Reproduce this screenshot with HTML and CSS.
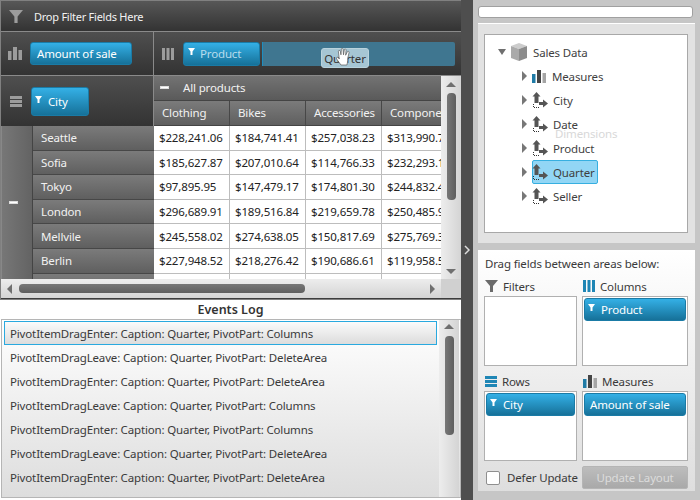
FILE: index.html
```html
<!DOCTYPE html>
<html lang="en">
<head>
  <meta charset="UTF-8">
  <title>Pivot Grid Events</title>
  <link rel="stylesheet" href="styles.css">
</head>
<body>
  <svg class="defs" width="0" height="0">
    <symbol id="i-funnel" viewBox="0 0 13 12"><path d="M0 0h13L8 6v6H5V6z"/></symbol>
    <symbol id="i-mini" viewBox="0 0 7 7"><path d="M0 0h7L4.500 3.500V7h-2V3.500z"/></symbol>
    <symbol id="i-bars" viewBox="0 0 14 13"><path d="M0 4h3.500v9H0zM5 0h4v13H5zM10.500 3H14v10h-3.500z"/></symbol>
    <symbol id="i-cols" viewBox="0 0 12 12"><path d="M0 0h3v12H0zM4.500 0h3v12h-3zM9 0h3v12H9z"/></symbol>
    <symbol id="i-rows" viewBox="0 0 12 11"><path d="M0 0h12v3H0zM0 4h12v3H0zM0 8h12v3H0z"/></symbol>
    <symbol id="i-dim" viewBox="0 0 16 16"><path d="M4.500 0L8.500 4.500H6.500V11h-4V4.500H.5zM7 10h4V7.500l5 4-5 4V13H7z" fill="#555"/><path d="M1.500 12v3.500H7" fill="none" stroke="#333" stroke-dasharray="1 1"/></symbol>
  </svg>

  <div class="app">
    <main class="left">
      <div class="pivot">
        <div class="filter-bar">
          <svg class="zone-icon"><use href="#i-funnel"/></svg>
          <span>Drop Filter Fields Here</span>
        </div>
        <div class="pivot-top">
          <div class="measures-zone">
            <svg class="zone-icon"><use href="#i-bars"/></svg>
            <div class="chip chip-amount">Amount of sale</div>
          </div>
          <div class="columns-zone">
            <svg class="zone-icon icon-cols"><use href="#i-cols"/></svg>
            <div class="chip chip-product"><svg class="mini"><use href="#i-mini"/></svg><span>Product</span></div>
            <div class="drop-slot"></div>
          </div>
        </div>
        <div class="pivot-body">
          <div class="pivot-view">
            <div class="row-side">
              <div class="rows-zone">
                <svg class="zone-icon icon-rows"><use href="#i-rows"/></svg>
                <div class="chip chip-city"><svg class="mini"><use href="#i-mini"/></svg><span>City</span></div>
              </div>
              <div class="row-heads">
                <div class="row-group"><span class="minus"></span></div>
                <div class="row-names">
                  <div class="row-name">Seattle</div>
                  <div class="row-name">Sofia</div>
                  <div class="row-name">Tokyo</div>
                  <div class="row-name">London</div>
                  <div class="row-name">Mellvile</div>
                  <div class="row-name">Berlin</div>
                  <div class="row-name"></div>
                </div>
              </div>
            </div>
            <div class="data-side">
              <div class="all-head"><span class="minus"></span><span>All products</span></div>
              <div class="col-heads">
                <div class="col-head">Clothing</div>
                <div class="col-head">Bikes</div>
                <div class="col-head">Accessories</div>
                <div class="col-head">Components</div>
              </div>
              <div class="data-row"><div>$228,241.06</div><div>$184,741.41</div><div>$257,038.23</div><div>$313,990.75</div></div>
              <div class="data-row"><div>$185,627.87</div><div>$207,010.64</div><div>$114,766.33</div><div>$232,293.14</div></div>
              <div class="data-row"><div>$97,895.95</div><div>$147,479.17</div><div>$174,801.30</div><div>$244,832.48</div></div>
              <div class="data-row"><div>$296,689.91</div><div>$189,516.84</div><div>$219,659.78</div><div>$250,485.92</div></div>
              <div class="data-row"><div>$245,558.02</div><div>$274,638.05</div><div>$150,817.69</div><div>$275,769.36</div></div>
              <div class="data-row"><div>$227,948.52</div><div>$218,276.42</div><div>$190,686.61</div><div>$119,958.54</div></div>
              <div class="data-row"><div></div><div></div><div></div><div></div></div>
            </div>
          </div>
          <div class="vscroll">
            <span class="arrow-up"></span>
            <span class="vthumb"></span>
            <span class="arrow-down"></span>
          </div>
        </div>
        <div class="hscroll-row">
          <div class="hscroll">
            <span class="arrow-left"></span>
            <span class="hthumb"></span>
            <span class="arrow-right"></span>
          </div>
          <div class="corner"></div>
        </div>
      </div>

      <h2 class="log-title">Events Log</h2>
      <div class="log">
        <div class="log-list">
          <div class="log-item selected">PivotItemDragEnter: Caption: Quarter, PivotPart: Columns</div>
          <div class="log-item">PivotItemDragLeave: Caption: Quarter, PivotPart: DeleteArea</div>
          <div class="log-item">PivotItemDragEnter: Caption: Quarter, PivotPart: DeleteArea</div>
          <div class="log-item">PivotItemDragLeave: Caption: Quarter, PivotPart: Columns</div>
          <div class="log-item">PivotItemDragEnter: Caption: Quarter, PivotPart: Columns</div>
          <div class="log-item">PivotItemDragLeave: Caption: Quarter, PivotPart: DeleteArea</div>
          <div class="log-item">PivotItemDragEnter: Caption: Quarter, PivotPart: DeleteArea</div>
        </div>
        <div class="log-scroll">
          <span class="arrow-up"></span>
          <span class="log-thumb"></span>
        </div>
      </div>
    </main>

    <div class="splitter"><svg width="6" height="10" viewBox="0 0 6 10"><path d="M1 1l4 4-4 4" fill="none" stroke="#ddd" stroke-width="1.500"/></svg></div>

    <aside class="right">
      <div class="search"></div>
      <div class="tree-panel">
        <div class="tree">
          <div class="tree-row root">
            <span class="arrow-open"></span>
            <svg class="cube" width="16" height="18" viewBox="0 0 16 18"><path d="M8 0l8 3-8 3-8-3z" fill="#ccc"/><path d="M0 3l8 3v12l-8-3z" fill="#aaa"/><path d="M16 3L8 6v12l8-3z" fill="#8c8c8c"/></svg>
            <span>Sales Data</span>
          </div>
          <div class="tree-row">
            <span class="arrow-closed"></span>
            <svg class="tree-icon icon-measures" width="14" height="13" viewBox="0 0 14 13"><path d="M0 4h3.500v9H0z" fill="#1f7ba6"/><path d="M5 0h4v13H5z" fill="#444"/><path d="M10.500 3H14v10h-3.500z" fill="#a5a5a5"/></svg>
            <span>Measures</span>
          </div>
          <div class="tree-row"><span class="arrow-closed"></span><svg class="tree-icon" width="16" height="16"><use href="#i-dim"/></svg><span>City</span></div>
          <div class="tree-row"><span class="arrow-closed"></span><svg class="tree-icon" width="16" height="16"><use href="#i-dim"/></svg><span>Date</span></div>
          <div class="tree-row"><span class="arrow-closed"></span><svg class="tree-icon" width="16" height="16"><use href="#i-dim"/></svg><span>Product</span></div>
          <div class="tree-row"><span class="arrow-closed"></span><div class="tree-hl"><svg class="tree-icon" width="16" height="16"><use href="#i-dim"/></svg><span>Quarter</span></div></div>
          <div class="tree-row"><span class="arrow-closed"></span><svg class="tree-icon" width="16" height="16"><use href="#i-dim"/></svg><span>Seller</span></div>
        </div>
      </div>
      <div class="fields-panel">
        <p class="fields-hint">Drag fields between areas below:</p>
        <div class="areas">
          <div class="area">
            <div class="area-label"><svg class="area-icon grey" width="13" height="12"><use href="#i-funnel"/></svg>Filters</div>
            <div class="area-box"></div>
          </div>
          <div class="area">
            <div class="area-label"><svg class="area-icon blue" width="12" height="12"><use href="#i-cols"/></svg>Columns</div>
            <div class="area-box"><div class="chip chip-list"><svg class="mini"><use href="#i-mini"/></svg><span>Product</span></div></div>
          </div>
          <div class="area">
            <div class="area-label"><svg class="area-icon blue" width="12" height="11"><use href="#i-rows"/></svg>Rows</div>
            <div class="area-box"><div class="chip chip-list"><svg class="mini"><use href="#i-mini"/></svg><span>City</span></div></div>
          </div>
          <div class="area">
            <div class="area-label"><svg class="area-icon" width="14" height="13" viewBox="0 0 14 13"><path d="M0 4h3.500v9H0z" fill="#1f7ba6"/><path d="M5 0h4v13H5z" fill="#444"/><path d="M10.500 3H14v10h-3.500z" fill="#a5a5a5"/></svg>Measures</div>
            <div class="area-box"><div class="chip chip-list chip-plain">Amount of sale</div></div>
          </div>
        </div>
        <div class="fields-foot">
          <label class="defer"><span class="checkbox"></span>Defer Update</label>
          <button class="update" disabled>Update Layout</button>
        </div>
      </div>
    </aside>
  </div>

  <!-- drag cue over the pivot and the ghost text over the tree -->
  <div class="drag-cue">Quarter</div>
  <svg class="hand" width="17" height="19" viewBox="0 0 20 22"><path d="M7 21L2 14C1 12 3 11 4.500 13L5 14 4 5C4 3.500 6 3.500 6.300 5L7 9 7.500 2.500C7.500 1 9.500 1 9.500 2.500L10 9 11 3C11.200 1.500 13 2 13 3.500L12.500 9.500 14.500 5.500C15 4.200 17 5 16.500 6.500L15 13C15 17 14.500 19 14 21z" fill="#fff" stroke="#555" stroke-width=".8"/></svg>
  <div class="ghost-text">Dimensions</div>
</body>
</html>
```

FILE: styles.css
```css
* {
  box-sizing: border-box;
}
html, body {
  height: 100%;
}
body {
  margin: 0;
  overflow: hidden;
  position: relative;
  font-family: "Noto Sans", "Liberation Sans", sans-serif;
  font-size: 11.5px;
  letter-spacing: -0.15px;
  color: #3a3a3a;
  background-color: #fff;
}
.defs {
  position: absolute;
}
.app {
  display: flex;
  height: 500px;
}

/* left side */
.left {
  width: 461px;
  display: flex;
  flex-direction: column;
}
.pivot {
  height: 300px;
  display: flex;
  flex-direction: column;
  border-top: 1px solid #808080;
  border-left: 1px solid #808080;
  border-bottom: 1px solid #808080;
  color: #f2f2f2;
  background-color: #3c3c3c;
}
.zone-icon {
  width: 14px;
  height: 13px;
  fill: #9c9c9c;
  flex: none;
}
.filter-bar {
  height: 31px;
  display: flex;
  align-items: center;
  gap: 11px;
  padding-left: 8px;
  font-size: 11px;
  letter-spacing: -0.25px;
  background: linear-gradient(#575757, #333);
  border-bottom: 1px solid #8a8a8a;
}
.pivot-top {
  height: 44px;
  display: flex;
  background: linear-gradient(#4f4f4f, #333);
  border-bottom: 1px solid #8a8a8a;
}
.measures-zone {
  width: 153px;
  display: flex;
  align-items: center;
  gap: 8px;
  padding-left: 7px;
  border-right: 1px solid #8a8a8a;
}
.columns-zone {
  flex: 1;
  display: flex;
  align-items: center;
  padding-left: 8px;
  padding-right: 6px;
}
.icon-cols {
  width: 12px;
  height: 12px;
  margin-right: 9px;
}
.chip {
  height: 23px;
  display: flex;
  align-items: center;
  padding-left: 6px;
  color: #fff;
  background: linear-gradient(#34b0e6, #167199);
  border: 1px solid #1a7ba6;
  border-radius: 3px;
}
.mini {
  width: 7px;
  height: 7px;
  fill: #fff;
  margin-right: 6px;
  margin-bottom: 4px;
  flex: none;
}
.chip-amount {
  width: 102px;
}
.chip-product {
  width: 77px;
  height: 24px;
  flex: none;
  padding-left: 4px;
  color: #b8dcec;
}
.chip-product .mini {
  margin-right: 5px;
}
.drop-slot {
  flex: 1;
  height: 24px;
  margin-left: 2px;
  background-color: #3f7690;
  border-left: 1px solid #1d8ec0;
  border-radius: 0 2px 2px 0;
}
.pivot-body {
  height: 203px;
  display: flex;
}
.pivot-view {
  flex: 1;
  display: flex;
  min-width: 0;
  overflow: hidden;
}
.row-side {
  width: 153px;
  flex: none;
  display: flex;
  flex-direction: column;
}
.rows-zone {
  height: 50px;
  flex: none;
  display: flex;
  align-items: center;
  padding-left: 9px;
  gap: 9px;
  background: linear-gradient(#4f4f4f, #333);
  border-right: 1px solid #8a8a8a;
}
.icon-rows {
  width: 12px;
  height: 11px;
}
.chip-city {
  width: 58px;
  height: 29px;
  padding-left: 3px;
}
.row-heads {
  flex: 1;
  min-height: 0;
  overflow: hidden;
  display: flex;
  background: #555;
}
.row-group {
  width: 32px;
  flex: none;
  display: flex;
  align-items: center;
  padding-left: 7px;
  padding-bottom: 1px;
  background: linear-gradient(90deg, #777, #636363);
  border-right: 1px solid #444;
  border-left: 1px solid #888;
}
.minus {
  display: block;
  width: 9px;
  height: 3px;
  background-color: #fff;
  border: 1px solid #ddd;
  flex: none;
}
.row-names {
  flex: 1;
}
.row-name {
  height: 24.6px;
  display: flex;
  align-items: center;
  padding-left: 8px;
  background: linear-gradient(#7b7b7b, #5f5f5f);
  border-bottom: 1px solid #474747;
}
.data-side {
  flex: 1;
  min-width: 0;
  background-color: #fff;
}
.all-head {
  height: 25px;
  display: flex;
  align-items: center;
  gap: 14px;
  padding-left: 6px;
  padding-bottom: 1px;
  background: linear-gradient(#737373, #5a5a5a);
  border-bottom: 1px solid #444;
}
.col-heads {
  height: 25px;
  display: flex;
  background: linear-gradient(#7b7b7b, #5f5f5f);
  border-bottom: 1px solid #444;
}
.col-head {
  width: 76px;
  flex: none;
  display: flex;
  align-items: center;
  padding-left: 8px;
  padding-bottom: 1px;
  white-space: nowrap;
  border-right: 1px solid #474747;
}
.data-row {
  height: 24.6px;
  display: flex;
  color: #222;
  border-bottom: 1px solid #bdbdbd;
}
.data-row div {
  width: 76px;
  flex: none;
  display: flex;
  align-items: center;
  padding-left: 5px;
  white-space: nowrap;
  border-right: 1px solid #bdbdbd;
}
.vscroll, .log-scroll {
  width: 20px;
  flex: none;
  display: flex;
  flex-direction: column;
  align-items: center;
  background: linear-gradient(90deg, #ededed, #d4d4d4);
}
.vscroll {
  padding-top: 6px;
}
.vthumb {
  width: 9px;
  height: 107px;
  margin-top: 6px;
  border-radius: 4px;
  background: linear-gradient(90deg, #777, #5e5e5e);
}
.arrow-up, .arrow-down, .arrow-left, .arrow-right {
  display: block;
  width: 0;
  height: 0;
  flex: none;
  border-style: solid;
  border-color: transparent;
}
.arrow-up {
  border-width: 0 5px 5px;
  border-bottom-color: #6f6f6f;
}
.arrow-down {
  border-width: 5px 5px 0;
  border-top-color: #6f6f6f;
  margin-top: auto;
  margin-bottom: 5px;
}
.arrow-left {
  border-width: 5px 5px 5px 0;
  border-right-color: #6f6f6f;
}
.arrow-right {
  border-width: 5px 0 5px 5px;
  border-left-color: #6f6f6f;
  margin-left: auto;
}
.hscroll-row {
  height: 19px;
  flex: none;
  display: flex;
}
.hscroll {
  flex: 1;
  display: flex;
  align-items: center;
  padding: 0 6px;
  background: linear-gradient(#ededed, #d4d4d4);
}
.hthumb {
  width: 286px;
  height: 9px;
  margin-left: 7px;
  border-radius: 4px;
  background: linear-gradient(#777, #5e5e5e);
}
.corner {
  width: 20px;
  flex: none;
  background-color: #d0d0d0;
}
.log-title {
  height: 19px;
  margin: 0;
  text-align: center;
  font-size: 12.5px;
  line-height: 19px;
  font-weight: 600;
  letter-spacing: 0;
  color: #333;
}
.log {
  flex: 1;
  margin: 0 0 2px 1px;
  display: flex;
  padding: 1px;
  border: 1px solid #b5b5b5;
  background: linear-gradient(#fff, #ddd);
}
.log-list {
  flex: 1;
  padding-left: 1px;
  padding-right: 2px;
}
.log-item {
  height: 24px;
  display: flex;
  align-items: center;
  padding-left: 6px;
  white-space: nowrap;
}
.log-item.selected {
  background: linear-gradient(#fbfbfb, #dcdcdc);
  border: 1px solid #29a9df;
  padding-left: 5px;
}
.log-scroll {
  padding-top: 4px;
  margin-top: -1px;
  margin-bottom: -1px;
}
.log-thumb {
  width: 9px;
  height: 99px;
  margin-top: 7px;
  border-radius: 4px;
  background: linear-gradient(90deg, #777, #5e5e5e);
}

.splitter {
  width: 12px;
  flex: none;
  display: flex;
  align-items: center;
  justify-content: center;
  background-color: #4e4e4e;
}

/* right side */
.right {
  flex: 1;
  display: flex;
  flex-direction: column;
  padding: 6px 5px 9px 5px;
  background-color: #c6c6c6;
}
.search {
  height: 12px;
  background-color: #fff;
  border: 1px solid #a0a0a0;
  border-radius: 3px;
  margin-right: 2px;
}
.tree-panel {
  height: 220px;
  flex: none;
  margin-top: 5px;
  padding: 10px 7px 10px 6px;
  border-top: 1px solid #fff;
  background-color: #e2e2e2;
}
.tree {
  height: 199px;
  padding-top: 5px;
  background-color: #fff;
  border: 1px solid #a8a8a8;
}
.tree-row {
  height: 24px;
  display: flex;
  align-items: center;
  padding-left: 37px;
  color: #3f3f3f;
}
.tree-row.root {
  padding-left: 13px;
}
.arrow-open {
  width: 0;
  height: 0;
  margin-right: 5px;
  border-style: solid;
  border-width: 6px 4px 0;
  border-color: #6f6f6f transparent transparent;
}
.arrow-closed {
  width: 0;
  height: 0;
  margin-right: 5px;
  border-style: solid;
  border-width: 5px 0 5px 5px;
  border-color: transparent transparent transparent #777;
}
.cube {
  margin-right: 6px;
}
.tree-icon {
  margin-right: 5px;
  flex: none;
}
.icon-measures {
  margin-right: 6px;
}
.tree-hl {
  height: 24px;
  width: 66px;
  flex: none;
  display: flex;
  align-items: center;
  background-color: #92d6f5;
  border: 1px solid #37afe0;
  border-radius: 2px;
}
.tree-hl .tree-icon {
  margin-left: -1px;
}
.fields-panel {
  flex: 1;
  margin-top: 7px;
  padding: 5px 7px 0 6px;
  background: linear-gradient(#fff, #dedede);
}
.fields-hint {
  margin: 0 0 3px 1px;
  line-height: 18px;
}
.areas {
  display: grid;
  grid-template-columns: 93px 106px;
  column-gap: 5px;
  row-gap: 5px;
}
.area-label {
  height: 20px;
  display: flex;
  align-items: center;
  gap: 5px;
  padding-left: 1px;
}
.area-icon.grey {
  fill: #6b6b6b;
}
.area-icon.blue {
  fill: #1f86b5;
}
.area-box {
  height: 70px;
  padding: 1px;
  background-color: #fff;
  border: 1px solid #b0b0b0;
}
.chip-list {
  height: 23px;
  padding-left: 3px;
}
.chip-plain {
  padding-left: 5px;
}
.fields-foot {
  display: grid;
  grid-template-columns: 93px 106px;
  column-gap: 5px;
  align-items: center;
  margin-top: 5px;
}
.defer {
  display: flex;
  align-items: center;
  gap: 7px;
  padding-left: 2px;
  white-space: nowrap;
}
.checkbox {
  width: 14px;
  height: 14px;
  background-color: #fff;
  border: 1px solid #8f8f8f;
  border-radius: 2px;
  flex: none;
}
.update {
  height: 23px;
  font-family: inherit;
  font-size: 11.5px;
  letter-spacing: inherit;
  color: #dcdcdc;
  background: linear-gradient(#bdbdbd, #a9a9a9);
  border: 1px solid #b5b5b5;
  border-radius: 2px;
  padding: 0;
}

/* overlays */
.drag-cue {
  position: absolute;
  left: 321px;
  top: 48px;
  width: 48px;
  height: 20px;
  line-height: 19px;
  text-align: center;
  color: #333;
  background-color: #a6c6d4;
  border: 1px solid #bad3dd;
  border-radius: 3px;
}
.hand {
  position: absolute;
  left: 335px;
  top: 47px;
}
.ghost-text {
  position: absolute;
  left: 555px;
  top: 126px;
  color: #d8d8d8;
}
```
